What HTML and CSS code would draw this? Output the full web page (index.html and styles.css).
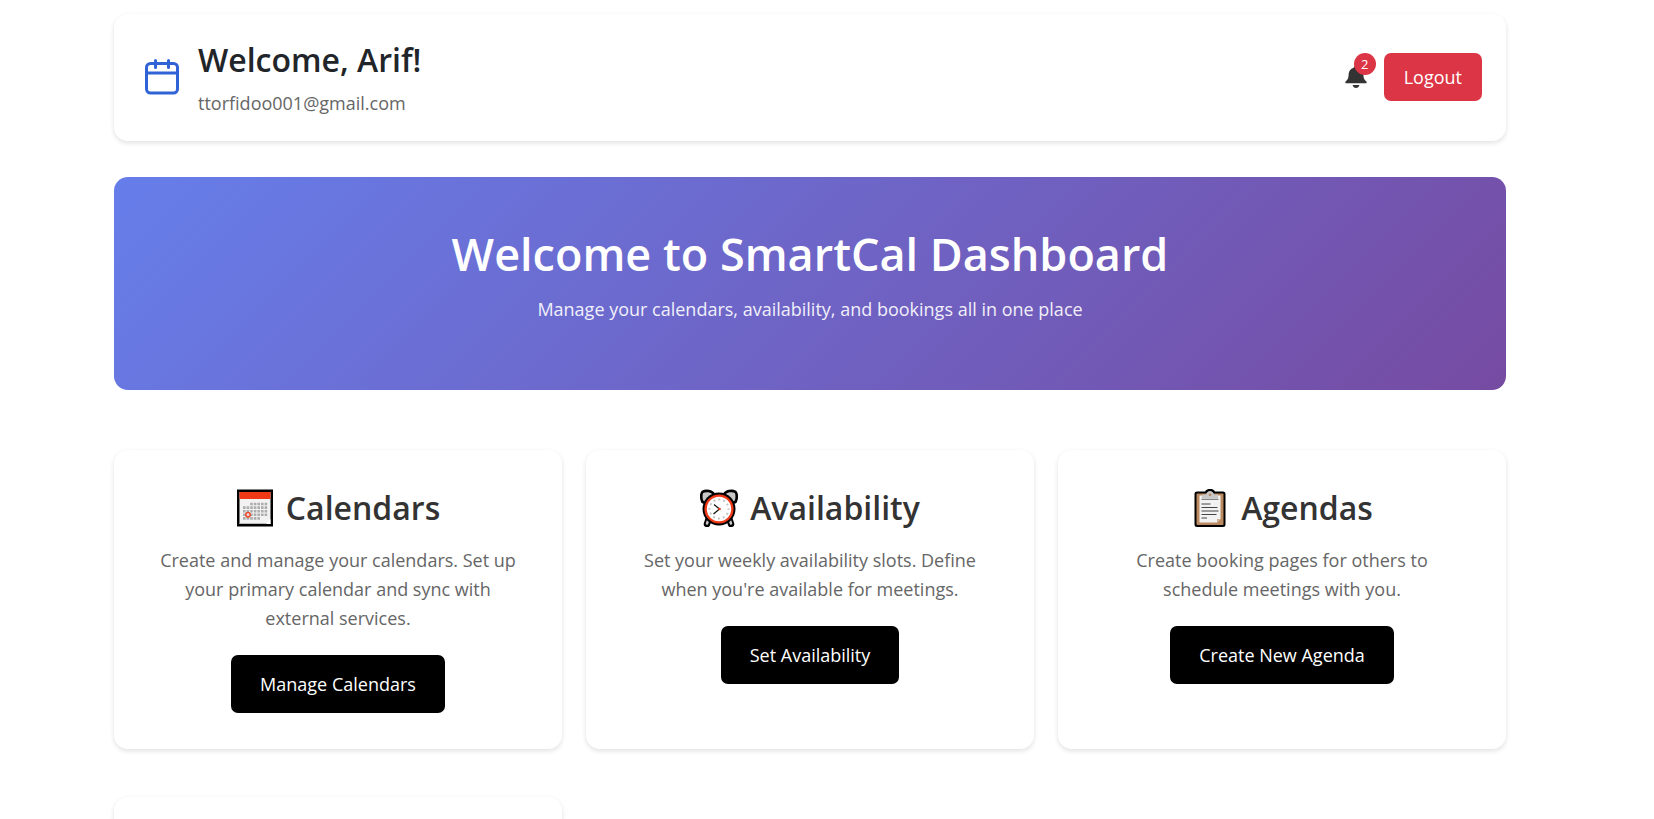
FILE: index.html
```html
<!DOCTYPE html>
<html lang="en">
<head>
<meta charset="utf-8">
<meta name="viewport" content="width=device-width, initial-scale=1">
<title>SmartCal Dashboard</title>
<link rel="stylesheet" href="styles.css">
</head>
<body>
<div class="container">
  <header class="topbar">
    <svg class="brand-icon" viewBox="0 0 34 36" aria-hidden="true">
      <rect x="1.500" y="4.500" width="31" height="29.500" rx="4"/>
      <path d="M1.500 14h31M10.500 1.500v7M23.500 1.500v7"/>
    </svg>
    <div class="user">
      <h1 class="user-name">Welcome, Arif!</h1>
      <p class="user-email">ttorfidoo001@gmail.com</p>
    </div>
    <div class="actions">
      <button class="bell" type="button" aria-label="Notifications, 2 unread">
        <svg class="bell-icon" viewBox="0 0 22 22" aria-hidden="true">
          <path d="M11 0C9.600 0 8.800.8 8.700 1.800C5.400 2.700 3.700 5.300 3.600 8.500C3.500 12.500 2.600 13.600.8 15.300C.3 15.800.2 17 .6 17.200H21.400C21.800 17 21.700 15.800 21.200 15.300C19.400 13.600 18.500 12.500 18.400 8.500C18.300 5.300 16.600 2.700 13.300 1.800C13.200.8 12.400 0 11 0ZM7.600 19H14.400C14 20.800 12.700 22 11 22S8 20.800 7.600 19Z"/>
        </svg>
        <span class="badge">2</span>
      </button>
      <button class="logout" type="button">Logout</button>
    </div>
  </header>

  <section class="hero">
    <h2 class="hero-title">Welcome to SmartCal Dashboard</h2>
    <p class="hero-text">Manage your calendars, availability, and bookings all in one place</p>
  </section>

  <main class="cards">
    <article class="card">
      <h3 class="card-title">
        <svg class="emoji" viewBox="0 0 38 38" aria-hidden="true">
          <rect x="1" y=".5" width="36" height="37"/>
          <rect x="3.500" y="3" width="31" height="32" fill="#f2f2f2"/>
          <rect x="3.500" y="3" width="31" height="7" fill="#f03a17"/>
          <path d="M3.500 34.500h31" stroke="#bbb"/>
          <path d="M30 35l4.500-5v5z" fill="#fff"/>
          <g stroke="#adadad" stroke-width="2.600" stroke-dasharray="2.600 1">
            <path d="M14.200 15h17M7 18.600h24.400M7 22.200h24.400M7 25.800h24.400M7 29.400h17.200"/>
          </g>
          <circle cx="12" cy="25.800" r="2.200" fill="#ddd" stroke="#f04a28" stroke-width="1.500"/>
        </svg>
        Calendars
      </h3>
      <p class="card-text">Create and manage your calendars. Set up your primary calendar and sync with external services.</p>
      <button class="card-button" type="button">Manage Calendars</button>
    </article>

    <article class="card">
      <h3 class="card-title">
        <svg class="emoji" viewBox="0 0 38 38" aria-hidden="true">
          <path d="M9 29L7 35M29 29l2 6" stroke="#000" stroke-width="6.500" stroke-linecap="round"/>
          <path d="M9 29L7 34.500M29 29l2 5.500" stroke="#c8c8c8" stroke-width="2.500" stroke-linecap="round"/>
          <path d="M2.500 13C.8 10 .8 4.500 2.500 2.800C6 1 12 1.800 14 5.500L5.500 14ZM35.500 13C37.200 10 37.200 4.500 35.500 2.800C32 1 26 1.800 24 5.500L32.500 14Z" fill="#c8c8c8" stroke="#000" stroke-width="2.600" stroke-linejoin="round"/>
          <circle cx="19" cy="20" r="16.500"/>
          <circle cx="19" cy="20" r="13.400" fill="#fff" stroke="#f03a17" stroke-width="2.400"/>
          <circle cx="19" cy="20" r="9.500" fill="none" stroke="#c4c4c4" stroke-width="2" stroke-dasharray="2 2.974" stroke-dashoffset="1"/>
          <path d="M14 15.500L19.500 20L13.500 25" fill="none" stroke="#111" stroke-width="1.200"/>
          <circle cx="19.500" cy="20" r="1.300" fill="#f03a17"/>
        </svg>
        Availability
      </h3>
      <p class="card-text">Set your weekly availability slots. Define when you're available for meetings.</p>
      <button class="card-button" type="button">Set Availability</button>
    </article>

    <article class="card">
      <h3 class="card-title">
        <svg class="emoji" viewBox="0 0 38 38" aria-hidden="true">
          <path d="M6 2.500H14C15 .5 17 0 19 0S23 .5 24 2.500H32Q34.500 2.500 34.500 5V35.500Q34.500 38 32 38H6Q3.500 38 3.500 35.500V5Q3.500 2.500 6 2.500Z"/>
          <rect x="5.500" y="4.500" width="27" height="31.500" rx="1" fill="#bb8a61"/>
          <path d="M8.500 6.500h21v23.500l-3.500 3.500H8.500z" fill="#f2f2f2"/>
          <path d="M26 33.500v-3.500h3.500z" fill="#d0b090"/>
          <path d="M11 9V5.500H15Q16 2 19 2T23 5.500H27V9Z" fill="#c8c8c8"/>
          <circle cx="19" cy="5.800" r="1.300" fill="#bb8a61"/>
          <path d="M10.500 10.300h17" stroke="#777" stroke-width="1.200"/>
          <path d="M10.500 15h9M10.500 18.500h16M10.500 22h17M10.500 25.500h15M10.500 29h5.500" stroke="#444" stroke-width="1.200"/>
        </svg>
        Agendas
      </h3>
      <p class="card-text">Create booking pages for others to schedule meetings with you.</p>
      <button class="card-button" type="button">Create New Agenda</button>
    </article>

    <article class="card"></article>
  </main>
</div>
</body>
</html>
```
FILE: styles.css
```css
* {
  box-sizing: border-box;
}

html {
  overflow: hidden;
}

body {
  margin: 0;
  padding: 14px 34px 0 0;
  background: #fff;
  color: #212529;
  font-family: "Open Sans", "Noto Sans", sans-serif;
  font-size: 18px;
  line-height: 29px;
}

h1,
h2,
h3,
p {
  margin: 0;
}

button {
  border: 0;
  font: inherit;
  cursor: pointer;
}

.container {
  max-width: 1440px;
  margin: 0 auto;
  padding: 0 24px;
}

.topbar {
  display: flex;
  align-items: center;
  margin-bottom: 36px;
  padding: 22px 24px 23px 31px;
  border-radius: 14px;
  background: #fff;
  box-shadow: 0 2px 5px rgba(0, 0, 0, 0.12);
}

.brand-icon {
  width: 34px;
  height: 36px;
  margin-right: 19px;
  fill: none;
  stroke: #2f63d6;
  stroke-width: 3;
  stroke-linecap: round;
}

.user-name {
  margin-bottom: 6px;
  font-size: 32px;
  font-weight: 600;
  line-height: 47px;
}

.user-email {
  color: #666;
}

.actions {
  display: flex;
  align-items: center;
  gap: 17px;
  margin-left: auto;
}

.bell {
  position: relative;
  padding: 0;
  background: none;
}

.bell-icon {
  display: block;
  width: 22px;
  height: 22px;
  fill: #333;
}

.badge {
  position: absolute;
  top: -13px;
  right: -9px;
  width: 22px;
  height: 22px;
  border-radius: 50%;
  background: #dc3545;
  color: #fff;
  font-size: 13px;
  line-height: 22px;
}

.logout {
  padding: 10px 20px 9px;
  border-radius: 7px;
  background: #dc3545;
  color: #fff;
}

.hero {
  margin-bottom: 60px;
  padding: 48px 48px 66px;
  border-radius: 14px;
  background: linear-gradient(135deg, #667eea 0%, #764ba2 100%);
  color: #fff;
  text-align: center;
}

.hero-title {
  margin-bottom: 12px;
  font-size: 45px;
  font-weight: 600;
  line-height: 58px;
}

.hero-text {
  opacity: 0.9;
}

.cards {
  display: grid;
  grid-template-columns: repeat(3, 1fr);
  gap: 48px 24px;
}

.card {
  min-height: 120px;
  padding: 36px 42px;
  border-radius: 14px;
  background: #fff;
  box-shadow: 0 2px 5px rgba(0, 0, 0, 0.12);
  text-align: center;
}

.card-title {
  display: flex;
  align-items: center;
  justify-content: center;
  gap: 12px;
  margin-bottom: 16px;
  color: #333;
  font-size: 32px;
  font-weight: 600;
  line-height: 44px;
}

.emoji {
  width: 38px;
  height: 38px;
}

.card-text {
  margin-bottom: 22px;
  color: #666;
}

.card-button {
  padding: 15px 29px 14px;
  border-radius: 7px;
  background: #000;
  color: #fff;
}
```
